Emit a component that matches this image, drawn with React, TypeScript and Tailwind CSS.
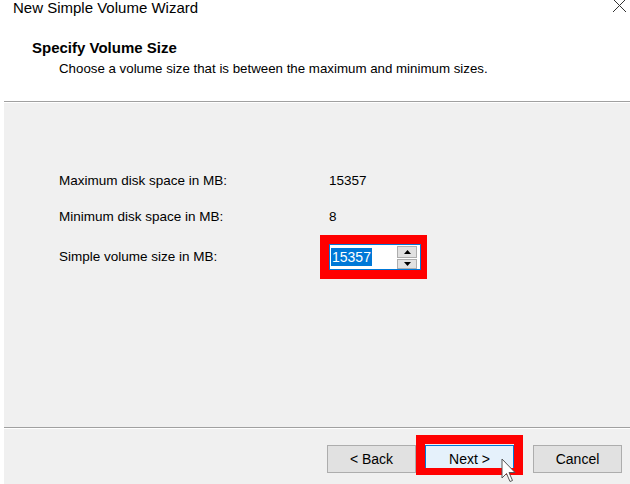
import React from 'react';

function Spinner() {
  return (
    <div className="relative w-[92px] h-[26px] bg-white border border-[#0078d7] flex items-center">
      <span className="ml-[1px] h-[18px] leading-[18px] px-[1px] bg-[#0078d7] text-white text-[14px]">15357</span>
      <div className="ml-auto mr-[3px] flex flex-col gap-[1px]">
        <div className="w-[20px] h-[12px] bg-[#e1e1e1] border border-[#adadad] flex items-center justify-center">
          <svg width="7" height="4" viewBox="0 0 7 4"><path d="M0 4 L3.5 0 L7 4 Z" fill="#000" /></svg>
        </div>
        <div className="w-[20px] h-[10px] bg-[#e1e1e1] border border-[#adadad] flex items-center justify-center">
          <svg width="7" height="4" viewBox="0 0 7 4"><path d="M0 0 L3.5 4 L7 0 Z" fill="#000" /></svg>
        </div>
      </div>
      {/* annotation frame */}
      <div className="absolute left-[-10px] top-[-10px] w-[107px] h-[44px] border-[#ff0000] border-l-[9px] border-t-[9px] border-r-[6px] border-b-[9px]" />
    </div>
  );
}

function WizardButton({ label, focused = false }: { label: string; focused?: boolean }) {
  return (
    <button
      type="button"
      className={`w-[89px] h-[28px] text-[14px] text-black border ${
        focused ? 'bg-[#e5f1fb] border-[#0078d7]' : 'bg-[#e1e1e1] border-[#adadad]'
      }`}
    >
      {label}
    </button>
  );
}

export default function App() {
  return (
    <div className="relative w-[630px] h-[484px] bg-white overflow-hidden flex flex-col font-['Liberation_Sans',Arial,sans-serif] text-black">
      {/* title bar */}
      <div className="h-[32px] flex items-start justify-between pl-[13px] pr-[3px]">
        <span className="text-[15px] leading-[15px]">New Simple Volume Wizard</span>
        <svg width="15" height="14" viewBox="0 0 15 14" className="-mt-[1px]">
          <path d="M1 0 L14 13 M14 0 L1 13" stroke="#333" strokeWidth="1" fill="none" />
        </svg>
      </div>

      {/* header */}
      <div className="h-[69px] pl-[32px] pt-[8px]">
        <div className="text-[15px] leading-[16px] font-bold">Specify Volume Size</div>
        <div className="pl-[27px] mt-[5px] text-[13.3px] leading-[16px]">
          Choose a volume size that is between the maximum and minimum sizes.
        </div>
      </div>

      <div className="h-[1px] bg-[#a0a0a0] ml-[4px]" />
      <div className="h-[1px] bg-white" />

      {/* body */}
      <div className="flex-1 ml-[4px] bg-[#f0f0f0] flex flex-col">
        <div className="h-[324px] pl-[55px] pt-[68px] text-[13.5px] leading-[20px]">
          <div className="flex">
            <span className="w-[261px]">Maximum disk space in MB:</span>
            <span className="pl-[9px]">15357</span>
          </div>
          <div className="flex mt-[16px]">
            <span className="w-[261px]">Minimum disk space in MB:</span>
            <span className="pl-[9px]">8</span>
          </div>
          <div className="flex items-center mt-[17px] h-[26px]">
            <span className="w-[270px]">Simple volume size in MB:</span>
            <Spinner />
          </div>
        </div>

        <div className="h-[1px] bg-[#a0a0a0]" />
        <div className="h-[1px] bg-white" />

        <div className="flex-1 flex pl-[323px] pt-[16px]">
          <WizardButton label="< Back" />
          <div className="relative ml-[9px]">
            <WizardButton label="Next >" focused />
            {/* annotation frame */}
            <div className="absolute left-[-9px] top-[-10px] w-[107px] h-[40px] border-[9px] border-b-[7px] border-[#ff0000]" />
          </div>
          <div className="ml-[19px]">
            <WizardButton label="Cancel" />
          </div>
        </div>
      </div>

      {/* mouse cursor */}
      <svg width="15" height="25" viewBox="0 0 15 25" className="absolute left-[501px] top-[458px]">
        <path d="M1 1 L1 20 L5.5 15.5 L9 23.5 L11.5 22.5 L8 14.5 L14 14.5 Z" fill="#fff" stroke="#555" strokeWidth="1" strokeLinejoin="round" />
      </svg>
    </div>
  );
}
